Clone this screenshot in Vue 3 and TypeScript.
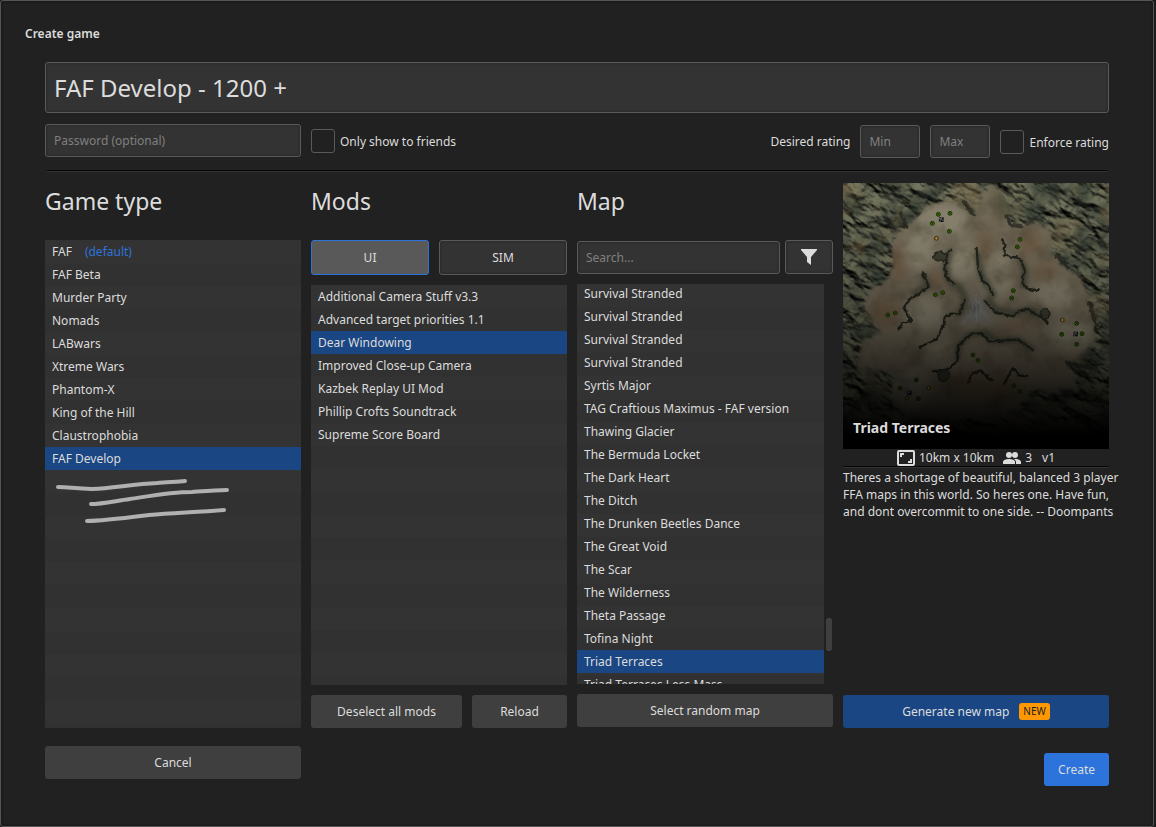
<script setup lang="ts">
import { computed, nextTick, onMounted, ref } from 'vue'

interface GameType {
  name: string
  isDefault?: boolean
}

const title = ref('FAF Develop - 1200 +')
const password = ref('')
const friendsOnly = ref(false)
const minRating = ref('')
const maxRating = ref('')
const enforceRating = ref(false)
const search = ref('')

const gameTypes: GameType[] = [
  { name: 'FAF', isDefault: true },
  { name: 'FAF Beta' },
  { name: 'Murder Party' },
  { name: 'Nomads' },
  { name: 'LABwars' },
  { name: 'Xtreme Wars' },
  { name: 'Phantom-X' },
  { name: 'King of the Hill' },
  { name: 'Claustrophobia' },
  { name: 'FAF Develop' },
]
const selectedType = ref('FAF Develop')

const mods = [
  'Additional Camera Stuff v3.3',
  'Advanced target priorities 1.1',
  'Dear Windowing',
  'Improved Close-up Camera',
  'Kazbek Replay UI Mod',
  'Phillip Crofts Soundtrack',
  'Supreme Score Board',
]
const selectedMods = ref<string[]>(['Dear Windowing'])
const modKind = ref<'UI' | 'SIM'>('UI')

const maps = [
  'Survival Stranded',
  'Survival Stranded',
  'Survival Stranded',
  'Survival Stranded',
  'Syrtis Major',
  'TAG Craftious Maximus - FAF version',
  'Thawing Glacier',
  'The Bermuda Locket',
  'The Dark Heart',
  'The Ditch',
  'The Drunken Beetles Dance',
  'The Great Void',
  'The Scar',
  'The Wilderness',
  'Theta Passage',
  'Tofina Night',
  'Triad Terraces',
  'Triad Terraces Less Mass',
]
const selectedMap = ref('Triad Terraces')
const shownMaps = computed(() =>
  maps.filter((m) => m.toLowerCase().includes(search.value.toLowerCase())),
)
const mapList = ref<HTMLElement | null>(null)

function toggleMod(mod: string) {
  selectedMods.value = selectedMods.value.includes(mod)
    ? selectedMods.value.filter((m) => m !== mod)
    : [...selectedMods.value, mod]
}

function pickRandom() {
  selectedMap.value = maps[Math.floor(Math.random() * maps.length)]
}

onMounted(async () => {
  await nextTick()
  if (mapList.value) mapList.value.scrollTop = 2
})

const massSpots = [
  [301, 104], [336, 101], [283, 131], [334, 155], [546, 179], [538, 202],
  [314, 339], [292, 345], [526, 333], [521, 355], [172, 400], [149, 406],
  [716, 431], [671, 464], [732, 462], [716, 494], [405, 526], [420, 542],
  [235, 601], [186, 626], [241, 657], [528, 618], [545, 636],
]
const energySpots = [[295, 176], [673, 421], [272, 625], [207, 656]]
const startSpots = [[310, 120], [713, 463], [214, 640]]
</script>

<template>
  <main class="dialog">
    <h1 class="caption">Create game</h1>

    <form class="body" @submit.prevent>
      <input v-model="title" class="field title" type="text" aria-label="Game title" />

      <div class="options">
        <input v-model="password" class="field password" type="text" placeholder="Password (optional)" aria-label="Password" />
        <label class="check friends">
          <input v-model="friendsOnly" type="checkbox" />
          <span>Only show to friends</span>
        </label>
        <div class="rating">
          <span>Desired rating</span>
          <input v-model="minRating" class="field num" type="text" placeholder="Min" aria-label="Minimum rating" />
          <input v-model="maxRating" class="field num" type="text" placeholder="Max" aria-label="Maximum rating" />
          <label class="check">
            <input v-model="enforceRating" type="checkbox" />
            <span>Enforce rating</span>
          </label>
        </div>
      </div>

      <hr class="rule" />

      <div class="columns">
        <section class="column">
          <h2>Game type</h2>
          <div class="list">
            <button
              v-for="type in gameTypes"
              :key="type.name"
              type="button"
              class="row"
              :class="{ selected: type.name === selectedType }"
              @click="selectedType = type.name"
            >
              {{ type.name }}<span v-if="type.isDefault" class="default">(default)</span>
            </button>
            <svg class="scribble" viewBox="0 0 256 60" aria-hidden="true">
              <path d="M13 17C24 17 31 19 47 19C68 18 89 14 112 13C123 12 134 12 140 11" />
              <path d="M46 34C57 34 70 31 85 29C105 26 126 22 147 22C160 21 171 20 182 20" />
              <path d="M42 51C57 51 80 48 104 45C130 43 154 42 179 40" />
            </svg>
          </div>
        </section>

        <section class="column">
          <h2>Mods</h2>
          <div class="kinds">
            <button type="button" class="toggle ui" :class="{ on: modKind === 'UI' }" @click="modKind = 'UI'">UI</button>
            <button type="button" class="toggle sim" :class="{ on: modKind === 'SIM' }" @click="modKind = 'SIM'">SIM</button>
          </div>
          <div class="list">
            <button
              v-for="mod in mods"
              :key="mod"
              type="button"
              class="row"
              :class="{ selected: selectedMods.includes(mod) }"
              @click="toggleMod(mod)"
            >
              {{ mod }}
            </button>
          </div>
          <div class="actions">
            <button type="button" class="button deselect" @click="selectedMods = []">Deselect all mods</button>
            <button type="button" class="button reload">Reload</button>
          </div>
        </section>

        <section class="column">
          <h2>Map</h2>
          <div class="finder">
            <input v-model="search" class="field search" type="text" placeholder="Search..." aria-label="Search maps" />
            <button type="button" class="toggle filter" aria-label="Filter maps">
              <svg viewBox="0 0 16 16" width="16" height="16" aria-hidden="true">
                <path d="M0 0H16V1L10 8V16L6 13V8L0 1Z" fill="#dcdcdc" />
              </svg>
            </button>
          </div>
          <div class="scroller">
            <div ref="mapList" class="list maps">
              <button
                v-for="(map, i) in shownMaps"
                :key="i"
                type="button"
                class="row"
                :class="{ selected: map === selectedMap }"
                @click="selectedMap = map"
              >
                {{ map }}
              </button>
            </div>
            <div class="track"><div class="thumb"></div></div>
          </div>
          <button type="button" class="button random" @click="pickRandom">Select random map</button>
        </section>

        <section class="column details">
          <div class="preview">
            <svg viewBox="15 10 798 798" role="img" aria-label="Map preview">
              <defs>
                <filter id="rock" x="0" y="0" width="100%" height="100%" color-interpolation-filters="sRGB">
                  <feTurbulence type="fractalNoise" baseFrequency="0.014 0.026" numOctaves="5" seed="23" />
                  <feDiffuseLighting surfaceScale="28" diffuseConstant="0.95" lighting-color="#7c7f66">
                    <feDistantLight azimuth="250" elevation="52" />
                  </feDiffuseLighting>
                  <feGaussianBlur stdDeviation="1.5" />
                </filter>
                <filter id="tint" x="0" y="0" width="100%" height="100%" color-interpolation-filters="sRGB">
                  <feTurbulence type="fractalNoise" baseFrequency="0.009" numOctaves="4" seed="4" />
                  <feColorMatrix values="0 0 0 0 .52  0 0 0 0 .45  0 0 0 0 .32  4 0 0 0 -2" />
                </filter>
                <filter id="moss" x="0" y="0" width="100%" height="100%" color-interpolation-filters="sRGB">
                  <feTurbulence type="fractalNoise" baseFrequency="0.014" numOctaves="4" seed="19" />
                  <feColorMatrix values="0 0 0 0 .17  0 0 0 0 .2  0 0 0 0 .17  0 4 0 0 -1.7" />
                </filter>
                <filter id="grain" x="0" y="0" width="100%" height="100%" color-interpolation-filters="sRGB">
                  <feTurbulence type="fractalNoise" baseFrequency="0.016" numOctaves="4" seed="8" />
                  <feColorMatrix values="0 0 0 0 .26  0 0 0 0 .23  0 0 0 0 .17  2 0 0 0 -.9" />
                </filter>
                <filter id="edge" x="-10%" y="-10%" width="120%" height="120%">
                  <feTurbulence type="fractalNoise" baseFrequency="0.04" numOctaves="3" seed="2" />
                  <feDisplacementMap in="SourceGraphic" scale="26" xChannelSelector="R" yChannelSelector="G" />
                  <feGaussianBlur stdDeviation="4" />
                </filter>
                <filter id="ridge" x="-10%" y="-10%" width="120%" height="120%">
                  <feTurbulence type="fractalNoise" baseFrequency="0.07" numOctaves="2" seed="6" />
                  <feDisplacementMap in="SourceGraphic" scale="12" xChannelSelector="R" yChannelSelector="G" />
                  <feGaussianBlur stdDeviation="1.4" />
                </filter>
                <filter id="slope" x="-10%" y="-10%" width="120%" height="120%">
                  <feGaussianBlur stdDeviation="6" />
                </filter>
                <filter id="soft" x="-50%" y="-50%" width="200%" height="200%">
                  <feGaussianBlur stdDeviation="16" />
                </filter>
                <linearGradient id="shade" x1="0" y1="0" x2="0" y2="1">
                  <stop offset="0" stop-color="#000" stop-opacity="0" />
                  <stop offset="0.3" stop-color="#000" stop-opacity="0.12" />
                  <stop offset="0.55" stop-color="#000" stop-opacity="0.38" />
                  <stop offset="0.78" stop-color="#000" stop-opacity="0.76" />
                  <stop offset="0.95" stop-color="#000" stop-opacity="1" />
                </linearGradient>
                <clipPath id="land">
                  <path d="M200 145L240 115L265 80L310 65L350 72L385 95L410 108L425 70L435 35L450 20L485 25L505 60L515 95L505 130L550 140L600 130L640 150L640 210L670 255L720 290L745 330L750 370L765 400L770 470L745 510L690 545L700 580L720 620L650 640L590 630L560 660L530 690L440 720L300 725L220 710L165 680L160 640L170 580L100 570L65 565L60 510L85 480L130 470L120 440L90 400L80 370L100 330L150 300L165 250L160 210L180 160Z" />
                </clipPath>
              </defs>
              <g transform="rotate(32 414 409)">
                <rect x="-200" y="-200" width="1230" height="1230" filter="url(#rock)" />
              </g>
              <rect x="15" y="10" width="798" height="798" filter="url(#moss)" opacity="0.6" />
              <rect x="15" y="10" width="798" height="798" filter="url(#tint)" opacity="0.5" />
              <path
                d="M200 145L240 115L265 80L310 65L350 72L385 95L410 108L425 70L435 35L450 20L485 25L505 60L515 95L505 130L550 140L600 130L640 150L640 210L670 255L720 290L745 330L750 370L765 400L770 470L745 510L690 545L700 580L720 620L650 640L590 630L560 660L530 690L440 720L300 725L220 710L165 680L160 640L170 580L100 570L65 565L60 510L85 480L130 470L120 440L90 400L80 370L100 330L150 300L165 250L160 210L180 160Z"
                fill="#746c5a"
                filter="url(#edge)"
              />
              <g clip-path="url(#land)">
                <g filter="url(#soft)">
                  <g fill="#8c8672">
                    <ellipse cx="310" cy="125" rx="80" ry="52" />
                    <ellipse cx="370" cy="240" rx="45" ry="60" />
                    <ellipse cx="240" cy="210" rx="50" ry="60" />
                    <ellipse cx="480" cy="290" rx="45" ry="70" />
                    <ellipse cx="650" cy="350" rx="70" ry="45" />
                    <ellipse cx="700" cy="465" rx="60" ry="50" />
                    <ellipse cx="260" cy="400" rx="60" ry="50" />
                    <ellipse cx="320" cy="530" rx="60" ry="40" />
                    <ellipse cx="220" cy="630" rx="60" ry="60" />
                  </g>
                  <g fill="#705a42" opacity="0.8">
                    <ellipse cx="185" cy="250" rx="26" ry="60" />
                    <ellipse cx="140" cy="400" rx="42" ry="44" />
                    <ellipse cx="575" cy="190" rx="32" ry="38" />
                    <ellipse cx="440" cy="200" rx="22" ry="50" />
                    <ellipse cx="620" cy="280" rx="40" ry="28" />
                    <ellipse cx="370" cy="610" rx="75" ry="34" />
                    <ellipse cx="490" cy="625" rx="60" ry="40" />
                    <ellipse cx="540" cy="440" rx="60" ry="14" />
                    <ellipse cx="290" cy="300" rx="22" ry="30" />
                  </g>
                  <path d="M480 25L515 60L505 120L490 95L465 50Z" fill="#4c5138" />
                  <path d="M415 345L460 420L372 425Z" fill="#73777a" />
                </g>
                <rect x="15" y="10" width="798" height="798" filter="url(#grain)" opacity="0.5" />
              </g>
              <g fill="none" stroke="#93999d" stroke-width="3" opacity="0.4" filter="url(#ridge)">
                <path d="M415 345L400 400L375 430M415 345L432 395L455 425M416 360V430" />
              </g>
              <g filter="url(#slope)" fill="none" stroke="#3d4030" stroke-width="20" stroke-linecap="round" stroke-linejoin="round" opacity="0.75">
                <path d="M335 215L322 265L332 305L365 322L382 360L365 402" />
                <path d="M260 290L268 320L230 340" />
                <path d="M420 230L432 290L466 345" />
                <path d="M450 360L475 390L530 400L570 390L605 405" />
                <path d="M360 535V500L390 465L440 460L480 485L540 480L580 508" />
                <path d="M548 245L562 275L556 315" />
              </g>
              <g filter="url(#ridge)" fill="none" stroke-linecap="round" stroke-linejoin="round">
                <g stroke="#24251e" stroke-width="7">
                  <path d="M340 210L328 222L322 265L325 295L350 312" />
                  <path d="M255 280L272 320L240 345L215 358L197 385L222 422L190 432L180 450" />
                  <path d="M380 360L365 404L340 402L320 410V430L295 480L245 502" />
                  <path d="M416 205L420 265L432 302L450 315L465 345" />
                  <path d="M440 362L470 398L525 410L545 392L572 388L590 405L615 410L628 432" />
                  <path d="M492 182L502 195L498 228L545 235L560 270L552 310L570 328L605 332" />
                  <path d="M285 575L325 570L358 545L360 500L395 465L430 460L455 485L540 480L585 512" />
                  <path d="M390 610L405 580L430 573L462 605" />
                  <path d="M500 612L524 566L545 588L570 590" />
                </g>
                <g stroke="#23251e" stroke-width="12" opacity="0.7">
                  <path d="M188 100L205 140M380 70L405 105M655 225L690 265M755 370L775 440" />
                  <path d="M505 110L520 135L550 140M685 548L760 565" />
                </g>
                <g fill="#3c4030" stroke="#26281f" stroke-width="4">
                  <ellipse cx="307" cy="231" rx="20" ry="14" />
                  <ellipse cx="622" cy="402" rx="14" ry="16" />
                  <ellipse cx="317" cy="588" rx="17" ry="18" />
                </g>
              </g>
              <g v-for="([x, y], i) in massSpots" :key="'m' + i">
                <circle :cx="x" :cy="y" r="6" fill="#447a08" stroke="#182a08" stroke-width="2.5" />
                <path :d="`M${x - 3} ${y - 3}l6 6m0-6l-6 6`" stroke="#101d06" stroke-width="2" />
              </g>
              <g v-for="([x, y], i) in energySpots" :key="'e' + i">
                <circle :cx="x" :cy="y" r="6" fill="#5e4a20" stroke="#332c20" stroke-width="2" />
                <path :d="`M${x} ${y - 5}l4 5l-4 5l-4 -5Z`" fill="#d8901c" />
              </g>
              <g v-for="([x, y], i) in startSpots" :key="'s' + i">
                <rect :x="x - 7" :y="y - 7" width="14" height="14" fill="#111" />
                <path :d="`M${x - 7} ${y - 3}h5v5M${x + 1} ${y - 7}v6l5 5M${x - 4} ${y + 7}v-4`" fill="none" stroke="#a0a0a8" stroke-width="2" />
              </g>
              <rect x="15" y="10" width="798" height="798" fill="url(#shade)" />
            </svg>
            <strong class="map-name">Triad Terraces</strong>
          </div>
          <div class="facts">
            <svg viewBox="0 0 18 16" width="18" height="16" aria-hidden="true">
              <rect x="1" y="1" width="16" height="14" rx="1" fill="none" stroke="#dcdcdc" stroke-width="2" />
              <path d="M4 7V4H7M14 9V12H11" fill="none" stroke="#dcdcdc" stroke-width="2" />
            </svg>
            <span class="size">10km x 10km</span>
            <svg viewBox="0 0 18 12" width="18" height="12" aria-hidden="true">
              <g fill="#dcdcdc">
                <circle cx="6" cy="3" r="3" />
                <circle cx="12" cy="3" r="3" />
                <path d="M0 12V10C0 8 3 7 6 7S12 8 12 10V12Z" />
                <path d="M12 7C15 7 18 8 18 10V12H13V10C13 9 12 8 11 7Z" />
              </g>
            </svg>
            <span class="players">3</span>
            <span>v1</span>
          </div>
          <hr class="rule thin" />
          <p class="description">Theres a shortage of beautiful, balanced 3 player FFA maps in this world. So heres one. Have fun, and dont overcommit to one side. -- Doompants</p>
          <button type="button" class="button generate">Generate new map <span class="badge">NEW</span></button>
        </section>
      </div>

      <footer class="footer">
        <button type="button" class="button cancel">Cancel</button>
        <button type="submit" class="button create">Create</button>
      </footer>
    </form>
  </main>
</template>

<style>
body {
  margin: 0;
  background: #1b1b1b;
}
</style>

<style scoped>
* {
  box-sizing: border-box;
}

.dialog {
  display: flex;
  flex-direction: column;
  min-height: 100vh;
  margin-right: 2px;
  padding: 24px 44px 40px;
  border: 1px solid #555;
  border-radius: 3px;
  background: #212121;
  box-shadow: inset 0 0 3px #111;
  color: #dcdcdc;
  font: 12px/18px "Noto Sans", "Open Sans", sans-serif;
}

button,
input {
  margin: 0;
  color: inherit;
  font: inherit;
}

.caption {
  margin: 0 0 19px -20px;
  font-size: 12px;
  font-weight: 600;
  line-height: 18px;
}

.body {
  display: flex;
  flex: 1;
  flex-direction: column;
}

.field {
  min-width: 0;
  height: 33px;
  padding: 0 8px;
  border: 1px solid #5a5a5a;
  border-radius: 3px;
  outline: none;
  background: #333;
  box-shadow: inset 0 0 3px #222;
}

.field::placeholder {
  color: #808080;
  opacity: 1;
}

.title {
  height: 51px;
  font-size: 24px;
}

.options {
  display: flex;
  align-items: flex-start;
  margin-top: 11px;
}

.password {
  flex: 0 0 256px;
}

.check {
  display: flex;
  align-items: center;
  gap: 5px;
}

.check span {
  padding-top: 2px;
}

.check input {
  width: 24px;
  height: 24px;
  border: 1px solid #5a5a5a;
  border-radius: 3px;
  appearance: none;
  background: #212121;
}

.check input:checked {
  background: #2d73dc;
}

.friends {
  margin: 5px 0 0 10px;
}

.rating {
  display: flex;
  align-items: center;
  gap: 10px;
  margin: 1px 0 0 auto;
}

.num {
  width: 60px;
}

.rule {
  height: 2px;
  margin: 12px 2px 0;
  border: 0;
  border-top: 1px solid #050505;
  background: #333;
}

.columns {
  display: grid;
  flex: 1;
  grid-template-columns: repeat(3, minmax(0, 1fr)) 266px;
  gap: 10px;
  margin-top: 11px;
}

.column {
  display: flex;
  flex-direction: column;
}

h2 {
  margin: 0 0 21px;
  font-size: 23px;
  font-weight: 400;
  line-height: 36px;
}

.list {
  flex: 1;
  overflow: hidden;
  background: repeating-linear-gradient(#333 0 23px, #313131 23px 46px);
}

.row {
  display: block;
  width: 100%;
  height: 23px;
  padding: 0 7px;
  border: 0;
  background: none;
  text-align: left;
  white-space: nowrap;
}

.selected {
  background: #1a4683;
}

.default {
  margin-left: 13px;
  color: #2d73dc;
}

.scribble {
  display: block;
  width: 100%;
  max-width: 256px;
  fill: none;
  stroke: #b0b0b0;
  stroke-linecap: round;
  stroke-width: 4;
}

.kinds {
  display: flex;
  gap: 10px;
  margin-bottom: 10px;
}

.toggle {
  height: 35px;
  padding: 0;
  border: 1px solid #5a5a5a;
  border-radius: 3px;
  background: #333;
  box-shadow: inset 0 0 3px #222;
}

.toggle.on {
  border-color: #2d73dc;
  background: #595959;
  box-shadow: none;
}

.ui {
  flex: 118;
}

.sim {
  flex: 128;
}

.actions {
  display: flex;
  gap: 10px;
  margin-top: 10px;
}

.actions .button {
  padding: 0;
}

.deselect {
  flex: 151;
}

.reload {
  flex: 95;
}

.finder {
  display: flex;
  align-items: flex-end;
  gap: 5px;
  margin-bottom: 10px;
}

.search {
  flex: 1;
}

.filter {
  display: flex;
  align-items: center;
  justify-content: center;
  width: 48px;
  height: 34px;
}

.scroller {
  display: flex;
  flex: 1;
  gap: 2px;
}

.maps {
  flex: 1;
  height: 0;
  min-height: 100%;
}

.track {
  width: 7px;
  padding: 334px 1px 0 0;
}

.thumb {
  height: 33px;
  border-radius: 2px;
  background: #3f3f3f;
}

.button {
  height: 33px;
  padding: 0 14px;
  border: 0;
  border-radius: 3px;
  background: #3f3f3f;
}

.random {
  margin: 10px 0 1px;
}

.preview {
  position: relative;
  line-height: 0;
}

.preview svg {
  width: 100%;
}

.map-name {
  position: absolute;
  bottom: 12px;
  left: 10px;
  font-size: 14px;
  line-height: 18px;
}

.facts {
  display: flex;
  align-items: center;
  justify-content: center;
  height: 17px;
}

.size {
  margin: 0 9px 0 4px;
}

.players {
  margin: 0 10px 0 4px;
}

.thin {
  margin: 0;
}

.description {
  margin: 1px -12px 0 0;
  line-height: 17px;
}

.generate {
  display: flex;
  align-items: center;
  justify-content: center;
  gap: 10px;
  margin-top: auto;
  background: #1a4683;
}

.badge {
  padding: 0 4px;
  border-radius: 3px;
  background: #ff9800;
  color: #212121;
  font-size: 10px;
  line-height: 17px;
}

.footer {
  display: flex;
  align-items: flex-end;
  justify-content: space-between;
  height: 58px;
}

.cancel {
  width: 256px;
  margin-bottom: 7px;
}

.create {
  background: #2d73dc;
}
</style>
